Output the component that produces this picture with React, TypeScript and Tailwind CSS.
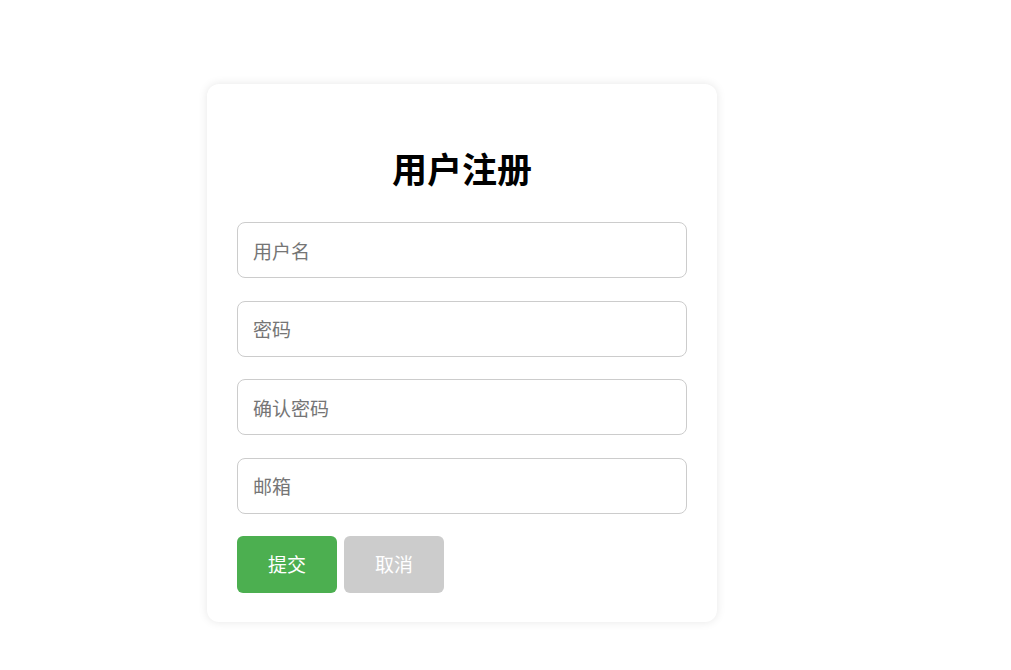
import React from 'react';

const fields = ['用户名', '密码', '确认密码', '邮箱'];

const App = () => {
  return (
    <div
      className="min-h-screen w-full bg-white"
      style={{ fontFamily: '"Noto Sans CJK SC", "Noto Sans", sans-serif' }}
    >
      <div className="pt-[84px] pl-[207px]">
        {/* Register Card */}
        <div className="w-[510px] rounded-[12px] bg-white px-[30px] pt-[36px] pb-[29px] shadow-[0_0_10px_rgba(0,0,0,0.1)]">
          <h2 className="mt-[28px] mb-[34px] text-center text-[35px] leading-[40px] font-bold text-black">
            用户注册
          </h2>
          <div className="flex flex-col gap-[22.5px]">
            {fields.map((label, index) => (
              <input
                key={index}
                type={label.includes('密码') ? 'password' : 'text'}
                placeholder={label}
                className="h-[56px] w-full rounded-[8px] border border-[#cccccc] px-[15px] text-[19px] text-[#333] outline-none placeholder:text-[#757575]"
              />
            ))}
          </div>
          <div className="mt-[22.5px] flex gap-[7px]">
            <button className="h-[57px] w-[100px] rounded-[6px] bg-[#4caf50] text-[19px] text-white">
              提交
            </button>
            <button className="h-[57px] w-[100px] rounded-[6px] bg-[#cccccc] text-[19px] text-white">
              取消
            </button>
          </div>
        </div>
      </div>
    </div>
  );
};

export default App;
